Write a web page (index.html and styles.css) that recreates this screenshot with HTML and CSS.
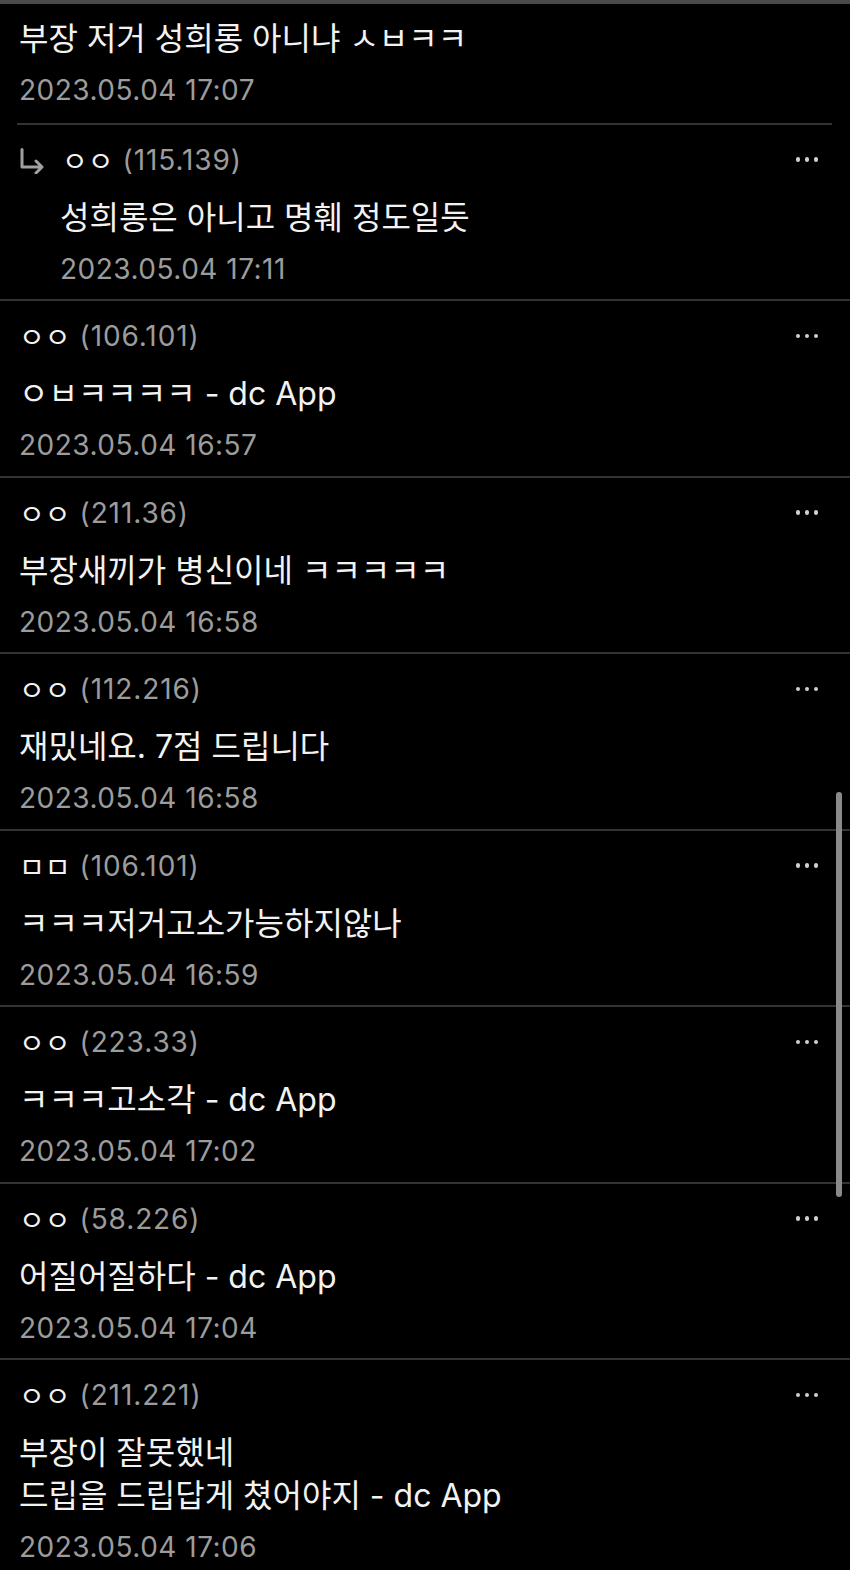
FILE: index.html
```html
<!DOCTYPE html>
<html lang="ko">
<head>
  <meta charset="utf-8">
  <title>댓글</title>
  <link rel="stylesheet" href="styles.css">
</head>
<body>
  <div class="page">
    <div class="topbar"></div>

    <div class="comments">
      <div class="comment comment-cut">
        <div class="comment-body">부장 저거 성희롱 아니냐 ㅅㅂㅋㅋ</div>
        <div class="comment-date">2023.05.04 17:07</div>
      </div>

      <div class="comment reply">
        <div class="comment-head">
          <span class="reply-mark">
            <svg width="26" height="26" viewBox="0 0 26 26"><path d="M3 1.5 V19 H23 M17 13 L23 19 L17 25" fill="none" stroke="#a0a0a0" stroke-width="3" stroke-linecap="round" stroke-linejoin="round"/></svg>
          </span>
          <span class="nick">ㅇㅇ</span> <span class="ip">(115.139)</span>
          <span class="more"><i></i><i></i><i></i></span>
        </div>
        <div class="comment-body">성희롱은 아니고 명훼 정도일듯</div>
        <div class="comment-date">2023.05.04 17:11</div>
      </div>

      <div class="comment">
        <div class="comment-head">
          <span class="nick">ㅇㅇ</span> <span class="ip">(106.101)</span>
          <span class="more"><i></i><i></i><i></i></span>
        </div>
        <div class="comment-body">ㅇㅂㅋㅋㅋㅋ - dc App</div>
        <div class="comment-date">2023.05.04 16:57</div>
      </div>

      <div class="comment">
        <div class="comment-head">
          <span class="nick">ㅇㅇ</span> <span class="ip">(211.36)</span>
          <span class="more"><i></i><i></i><i></i></span>
        </div>
        <div class="comment-body">부장새끼가 병신이네 ㅋㅋㅋㅋㅋ</div>
        <div class="comment-date">2023.05.04 16:58</div>
      </div>

      <div class="comment">
        <div class="comment-head">
          <span class="nick">ㅇㅇ</span> <span class="ip">(112.216)</span>
          <span class="more"><i></i><i></i><i></i></span>
        </div>
        <div class="comment-body">재밌네요. 7점 드립니다</div>
        <div class="comment-date">2023.05.04 16:58</div>
      </div>

      <div class="comment">
        <div class="comment-head">
          <span class="nick">ㅁㅁ</span> <span class="ip">(106.101)</span>
          <span class="more"><i></i><i></i><i></i></span>
        </div>
        <div class="comment-body">ㅋㅋㅋ저거고소가능하지않나</div>
        <div class="comment-date">2023.05.04 16:59</div>
      </div>

      <div class="comment">
        <div class="comment-head">
          <span class="nick">ㅇㅇ</span> <span class="ip">(223.33)</span>
          <span class="more"><i></i><i></i><i></i></span>
        </div>
        <div class="comment-body">ㅋㅋㅋ고소각 - dc App</div>
        <div class="comment-date">2023.05.04 17:02</div>
      </div>

      <div class="comment">
        <div class="comment-head">
          <span class="nick">ㅇㅇ</span> <span class="ip">(58.226)</span>
          <span class="more"><i></i><i></i><i></i></span>
        </div>
        <div class="comment-body">어질어질하다 - dc App</div>
        <div class="comment-date">2023.05.04 17:04</div>
      </div>

      <div class="comment">
        <div class="comment-head">
          <span class="nick">ㅇㅇ</span> <span class="ip">(211.221)</span>
          <span class="more"><i></i><i></i><i></i></span>
        </div>
        <div class="comment-body">부장이 잘못했네<br>드립을 드립답게 쳤어야지 - dc App</div>
        <div class="comment-date">2023.05.04 17:06</div>
      </div>
    </div>

    <div class="scrollbar"></div>
  </div>
</body>
</html>
```

FILE: styles.css
```css
html {
  font-family: Inter, "Noto Sans CJK KR", sans-serif;
}

body {
  margin: 0;
  background-color: #000;
  color: #f2f2f2;
}

.page {
  position: relative;
  height: 1570px;
  overflow: hidden;
}

.topbar {
  height: 4px;
  background-color: #4a4a4a;
}

.comment {
  padding: 15px 32px 10.5px 19px;
  border-bottom: 2px solid #333;
}

/* the comment cut off at the top of the scroll view */
.comment-cut {
  margin: 0 18px 0 17px;
  padding: 13px 0 12.5px 2px;
}

.comment-cut .comment-body {
  margin-top: 0;
}

.reply .comment-body,
.reply .comment-date {
  padding-left: 41px;
}

.comment-head {
  display: flex;
  align-items: center;
  height: 40px;
  font-size: 28px;
}

.reply-mark {
  display: inline-block;
  width: 26px;
  height: 26px;
  margin-right: 17px;
}

.nick {
  color: #f2f2f2;
  margin-right: 9px;
}

.ip {
  color: #9c9c9c;
  letter-spacing: 0.9px;
}

.more {
  margin-left: auto;
  display: flex;
  gap: 4.5px;
}

.more i {
  display: block;
  width: 4.5px;
  height: 4.5px;
  border-radius: 50%;
  background-color: #d0d0d0;
}

.comment-body {
  margin-top: 16px;
  font-size: 32px;
  line-height: 43px;
}

.comment-date {
  margin-top: 10px;
  font-size: 28px;
  line-height: 40px;
  letter-spacing: 0.5px;
  color: #9c9c9c;
}

.scrollbar {
  position: absolute;
  left: 836px;
  top: 792px;
  width: 6px;
  height: 405px;
  border-radius: 3px;
  background-color: #8a8a8a;
}
```
